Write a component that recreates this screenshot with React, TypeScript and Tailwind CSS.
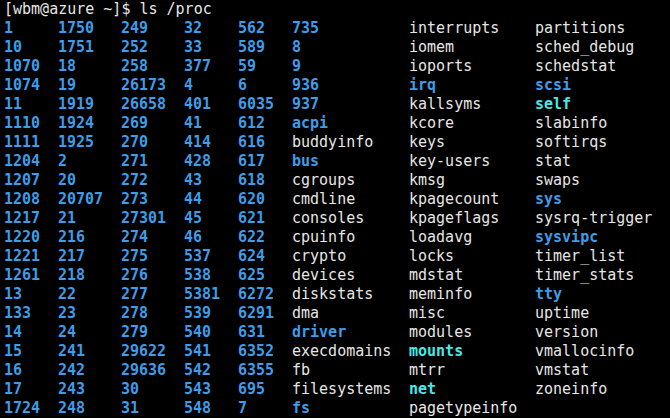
import React from "react";

type C = "b" | "w" | "c";
const B = "text-[#3d9de8] font-bold";
const W = "text-[#e6e6e6]";
const CY = "text-[#48e8e8] font-bold";

const col1 = "1,10,1070,1074,11,1110,1111,1204,1207,1208,1217,1220,1221,1261,13,133,14,15,16,17,1724".split(",");
const col2 = "1750,1751,18,19,1919,1924,1925,2,20,20707,21,216,217,218,22,23,24,241,242,243,248".split(",");
const col3 = "249,252,258,26173,26658,269,270,271,272,273,27301,274,275,276,277,278,279,29622,29636,30,31".split(",");
const col4 = "32,33,377,4,401,41,414,428,43,44,45,46,537,538,5381,539,540,541,542,543,548".split(",");
const col5 = "562,589,59,6,6035,612,616,617,618,620,621,622,624,625,6272,6291,631,6352,6355,695,7".split(",");
const col6: [string, C][] = [
  ["735", "b"], ["8", "b"], ["9", "b"], ["936", "b"], ["937", "b"], ["acpi", "b"], ["buddyinfo", "w"], ["bus", "b"],
  ["cgroups", "w"], ["cmdline", "w"], ["consoles", "w"], ["cpuinfo", "w"], ["crypto", "w"], ["devices", "w"],
  ["diskstats", "w"], ["dma", "w"], ["driver", "b"], ["execdomains", "w"], ["fb", "w"], ["filesystems", "w"], ["fs", "b"],
];
const col7: [string, C][] = [
  ["interrupts", "w"], ["iomem", "w"], ["ioports", "w"], ["irq", "b"], ["kallsyms", "w"], ["kcore", "w"], ["keys", "w"],
  ["key-users", "w"], ["kmsg", "w"], ["kpagecount", "w"], ["kpageflags", "w"], ["loadavg", "w"], ["locks", "w"],
  ["mdstat", "w"], ["meminfo", "w"], ["misc", "w"], ["modules", "w"], ["mounts", "c"], ["mtrr", "w"], ["net", "c"],
  ["pagetypeinfo", "w"],
];
const col8: [string, C][] = [
  ["partitions", "w"], ["sched_debug", "w"], ["schedstat", "w"], ["scsi", "b"], ["self", "c"], ["slabinfo", "w"],
  ["softirqs", "w"], ["stat", "w"], ["swaps", "w"], ["sys", "b"], ["sysrq-trigger", "w"], ["sysvipc", "b"],
  ["timer_list", "w"], ["timer_stats", "w"], ["tty", "b"], ["uptime", "w"], ["version", "w"], ["vmallocinfo", "w"],
  ["vmstat", "w"], ["zoneinfo", "w"], ["", "w"],
];

const cls = (c: C) => (c === "b" ? B : c === "c" ? CY : W);

export default function App() {
  return (
    <div
      className="w-[670px] h-[418px] overflow-hidden bg-black pl-[4px] text-[15px] leading-[19px] whitespace-pre"
      style={{ fontFamily: '"DejaVu Sans Mono", "Liberation Mono", monospace' }}
    >
      <div className={W}>[wbm@azure ~]$ ls /proc</div>
      {col1.map((_, i) => (
        <div key={i} className="flex">
          <span className={`w-[54px] shrink-0 ${B}`}>{col1[i]}</span>
          <span className={`w-[63px] shrink-0 ${B}`}>{col2[i]}</span>
          <span className={`w-[63px] shrink-0 ${B}`}>{col3[i]}</span>
          <span className={`w-[54px] shrink-0 ${B}`}>{col4[i]}</span>
          <span className={`w-[54px] shrink-0 ${B}`}>{col5[i]}</span>
          <span className={`w-[117px] shrink-0 ${cls(col6[i][1])}`}>{col6[i][0]}</span>
          <span className={`w-[126px] shrink-0 ${cls(col7[i][1])}`}>{col7[i][0]}</span>
          <span className={`shrink-0 ${cls(col8[i][1])}`}>{col8[i][0]}</span>
        </div>
      ))}
    </div>
  );
}
